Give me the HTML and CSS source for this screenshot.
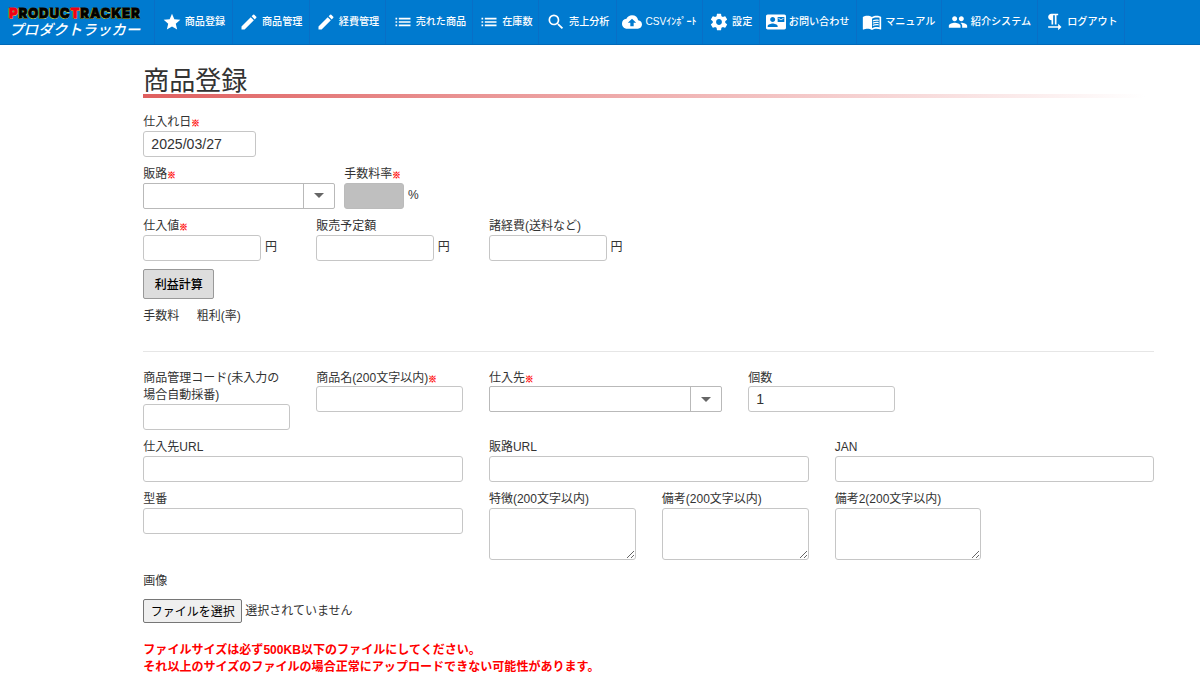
FILE: index.html
```html
<!DOCTYPE html>
<html lang="ja">
<head>
    <meta charset="utf-8">
    <title>商品登録</title>
    <link rel="stylesheet" href="styles.css">
</head>
<body>
    <header class="header">
        <a class="logo" href="#">
            <span class="logo-en"><span class="logo-red">P</span>RODUC<span class="logo-red">T</span>RACKER</span>
            <span class="logo-ja">プロダクトラッカー</span>
        </a>
        <nav class="menu">
            <a class="menu-item w78" href="#">
                <svg class="icon" viewBox="0 0 24 24"><path d="M12 17.27L18.18 21l-1.64-7.03L22 9.24l-7.19-.61L12 2 9.19 8.63 2 9.24l5.46 4.73L5.82 21z"/></svg>
                <span>商品登録</span>
            </a>
            <a class="menu-item w77" href="#">
                <svg class="icon" viewBox="0 0 24 24"><path d="M3 17.25V21h3.75L17.81 9.94l-3.75-3.75L3 17.25zM20.71 7.04a1 1 0 0 0 0-1.41l-2.34-2.34a1 1 0 0 0-1.41 0l-1.83 1.83 3.75 3.75 1.83-1.83z"/></svg>
                <span>商品管理</span>
            </a>
            <a class="menu-item w77" href="#">
                <svg class="icon" viewBox="0 0 24 24"><path d="M3 17.25V21h3.75L17.81 9.94l-3.75-3.75L3 17.25zM20.71 7.04a1 1 0 0 0 0-1.41l-2.34-2.34a1 1 0 0 0-1.41 0l-1.83 1.83 3.75 3.75 1.83-1.83z"/></svg>
                <span>経費管理</span>
            </a>
            <a class="menu-item w87" href="#">
                <svg class="icon" viewBox="0 0 24 24"><path d="M3 13h2v-2H3v2zm0 4h2v-2H3v2zm0-8h2V7H3v2zm4 4h14v-2H7v2zm0 4h14v-2H7v2zM7 7v2h14V7H7z"/></svg>
                <span>売れた商品</span>
            </a>
            <a class="menu-item w66" href="#">
                <svg class="icon" viewBox="0 0 24 24"><path d="M3 13h2v-2H3v2zm0 4h2v-2H3v2zm0-8h2V7H3v2zm4 4h14v-2H7v2zm0 4h14v-2H7v2zM7 7v2h14V7H7z"/></svg>
                <span>在庫数</span>
            </a>
            <a class="menu-item w78" href="#">
                <svg class="icon" viewBox="0 0 24 24"><path d="M15.5 14h-.79l-.28-.27A6.471 6.471 0 0 0 16 9.5 6.5 6.5 0 1 0 9.5 16c1.61 0 3.09-.59 4.23-1.57l.27.28v.79l5 4.99L20.49 19l-4.99-5zm-6 0C7.01 14 5 11.99 5 9.5S7.01 5 9.5 5 14 7.01 14 9.5 11.99 14 9.5 14z"/></svg>
                <span>売上分析</span>
            </a>
            <a class="menu-item w86" href="#">
                <svg class="icon" viewBox="0 0 24 24"><path d="M19.35 10.04A7.49 7.49 0 0 0 12 4C9.11 4 6.6 5.64 5.35 8.04A5.994 5.994 0 0 0 0 14c0 3.31 2.69 6 6 6h13c2.76 0 5-2.24 5-5 0-2.64-2.05-4.78-4.65-4.96zM14 13v4h-4v-4H7l5-5 5 5h-3z"/></svg>
                <span>CSVｲﾝﾎﾟｰﾄ</span>
            </a>
            <a class="menu-item w57" href="#">
                <svg class="icon" viewBox="0 0 24 24"><path d="M19.43 12.98c.04-.32.07-.64.07-.98s-.03-.66-.07-.98l2.11-1.65c.19-.15.24-.42.12-.64l-2-3.46c-.12-.22-.39-.3-.61-.22l-2.49 1c-.52-.4-1.08-.73-1.69-.98l-.38-2.65A.488.488 0 0 0 14 2h-4c-.25 0-.46.18-.49.42l-.38 2.65c-.61.25-1.17.59-1.69.98l-2.49-1c-.23-.09-.49 0-.61.22l-2 3.46c-.13.22-.07.49.12.64l2.11 1.65c-.04.32-.07.65-.07.98s.03.66.07.98l-2.11 1.65c-.19.15-.24.42-.12.64l2 3.46c.12.22.39.3.61.22l2.49-1c.52.4 1.08.73 1.69.98l.38 2.65c.03.24.24.42.49.42h4c.25 0 .46-.18.49-.42l.38-2.65c.61-.25 1.17-.59 1.69-.98l2.49 1c.23.09.49 0 .61-.22l2-3.46c.12-.22.07-.49-.12-.64l-2.11-1.65zM12 15.5c-1.93 0-3.5-1.57-3.5-3.5s1.57-3.5 3.5-3.5 3.5 1.57 3.5 3.5-1.57 3.5-3.5 3.5z"/></svg>
                <span>設定</span>
            </a>
            <a class="menu-item w97" href="#">
                <svg class="icon" viewBox="0 0 24 24"><path d="M21 8V7l-3 2-3-2v1l3 2 3-2zm1-5H2C.9 3 0 3.9 0 5v14c0 1.1.9 2 2 2h20c1.1 0 1.99-.9 1.99-2L24 5c0-1.1-.9-2-2-2zM8 6c1.66 0 3 1.34 3 3s-1.34 3-3 3-3-1.34-3-3 1.34-3 3-3zm6 12H2v-1c0-2 4-3.1 6-3.1s6 1.1 6 3.1v1zm8-6h-8V6h8v6z"/></svg>
                <span>お問い合わせ</span>
            </a>
            <a class="menu-item w85" href="#">
                <svg class="icon" viewBox="0 0 24 24"><path d="M21 5c-1.11-.35-2.33-.5-3.5-.5-1.95 0-4.05.4-5.5 1.5-1.45-1.1-3.55-1.5-5.5-1.5S2.45 4.9 1 6v14.65c0 .25.25.5.5.5.1 0 .15-.05.25-.05C3.1 20.45 5.05 20 6.5 20c1.95 0 4.05.4 5.5 1.5 1.35-.85 3.8-1.5 5.5-1.5 1.65 0 3.35.3 4.75 1.05.1.05.15.05.25.05.25 0 .5-.25.5-.5V6c-.6-.45-1.25-.75-2-1zm0 13.5c-1.1-.35-2.3-.5-3.5-.5-1.7 0-4.15.65-5.5 1.5V8c1.35-.85 3.8-1.5 5.5-1.5 1.2 0 2.4.15 3.5.5v11.5z"/><path d="M17.5 10.5c.88 0 1.73.09 2.5.26V9.24c-.79-.15-1.64-.24-2.5-.24-1.7 0-3.24.29-4.5.83v1.66c1.13-.64 2.7-.99 4.5-.99zM13 12.49v1.66c1.13-.64 2.7-.99 4.5-.99.88 0 1.73.09 2.5.26V11.9c-.79-.15-1.64-.24-2.5-.24-1.7 0-3.24.3-4.5.83zM17.5 14.33c-1.7 0-3.24.29-4.5.83v1.66c1.13-.64 2.7-.99 4.5-.99.88 0 1.73.09 2.5.26v-1.52c-.79-.16-1.64-.24-2.5-.24z"/></svg>
                <span>マニュアル</span>
            </a>
            <a class="menu-item w96" href="#">
                <svg class="icon" viewBox="0 0 24 24"><path d="M16 11c1.66 0 2.99-1.34 2.99-3S17.66 5 16 5s-3 1.34-3 3 1.34 3 3 3zm-8 0c1.66 0 2.99-1.34 2.99-3S9.66 5 8 5 5 6.34 5 8s1.34 3 3 3zm0 2c-2.33 0-7 1.17-7 3.5V19h14v-2.5c0-2.33-4.67-3.5-7-3.5zm8 0c-.29 0-.62.02-.97.05 1.16.84 1.97 1.97 1.97 3.45V19h6v-2.5c0-2.33-4.67-3.5-7-3.5z"/></svg>
                <span>紹介システム</span>
            </a>
            <a class="menu-item w87" href="#">
                <svg class="icon" viewBox="0 0 24 24"><path d="M9 10v5h2V4h2v11h2V4h2V2H9C6.79 2 5 3.79 5 6s1.79 4 4 4zm12 8l-4-4v3H5v2h12v3l4-4z"/></svg>
                <span>ログアウト</span>
            </a>
        </nav>
    </header>
    <main class="main">
        <h1 class="title">商品登録</h1>
        <form class="form">
            <div class="field date">
                <label>仕入れ日<b class="req">※</b></label>
                <input type="text" value="2025/03/27">
            </div>
            <div class="row">
                <div class="field route">
                    <label>販路<b class="req">※</b></label>
                    <div class="combo"><input type="text"><span class="arrow"></span></div>
                </div>
                <div class="field">
                    <label>手数料率<b class="req">※</b></label>
                    <div class="unit rate"><input type="text" disabled><span>%</span></div>
                </div>
            </div>
            <div class="grid">
                <div class="field">
                    <label>仕入値<b class="req">※</b></label>
                    <div class="unit"><input type="text"><span>円</span></div>
                </div>
                <div class="field">
                    <label>販売予定額</label>
                    <div class="unit"><input type="text"><span>円</span></div>
                </div>
                <div class="field">
                    <label>諸経費(送料など)</label>
                    <div class="unit"><input type="text"><span>円</span></div>
                </div>
            </div>
            <button class="calc" type="button">利益計算</button>
            <div class="result"><span>手数料</span><span>粗利(率)</span></div>
            <hr class="line">
            <div class="grid">
                <div class="field">
                    <label>商品管理コード(未入力の場合自動採番)</label>
                    <input type="text">
                </div>
                <div class="field">
                    <label>商品名(200文字以内)<b class="req">※</b></label>
                    <input type="text">
                </div>
                <div class="field span3">
                    <label>仕入先<b class="req">※</b></label>
                    <div class="combo"><input type="text"><span class="arrow"></span></div>
                </div>
                <div class="field">
                    <label>個数</label>
                    <input type="text" value="1">
                </div>
            </div>
            <div class="grid">
                <div class="field span4">
                    <label>仕入先URL</label>
                    <input type="text">
                </div>
                <div class="field span4">
                    <label>販路URL</label>
                    <input type="text">
                </div>
                <div class="field span4">
                    <label>JAN</label>
                    <input type="text">
                </div>
            </div>
            <div class="grid">
                <div class="field span4">
                    <label>型番</label>
                    <input type="text">
                </div>
                <div class="field">
                    <label>特徴(200文字以内)</label>
                    <textarea></textarea>
                </div>
                <div class="field">
                    <label>備考(200文字以内)</label>
                    <textarea></textarea>
                </div>
                <div class="field">
                    <label>備考2(200文字以内)</label>
                    <textarea></textarea>
                </div>
            </div>
            <div class="picture">
                <label>画像</label>
                <div class="file"><button type="button">ファイルを選択</button><span>選択されていません</span></div>
            </div>
            <p class="note">ファイルサイズは必ず500KB以下のファイルにしてください。<br>それ以上のサイズのファイルの場合正常にアップロードできない可能性があります。</p>
        </form>
    </main>
</body>
</html>
```
FILE: styles.css
```css
* {
    box-sizing: border-box;
}

html, body {
    margin: 0;
    padding: 0;
    overflow: hidden;
}

body, input, button, textarea {
    font-family: "Liberation Sans", "Noto Sans CJK JP", sans-serif;
    font-size: 12px;
    color: #333;
}

body {
    background-color: #fff;
    line-height: 17.4px;
}

.header {
    display: flex;
    height: 45px;
    background-color: #007acf;
    border-bottom: 1px solid #0069b8;
}

.logo {
    display: flex;
    flex-direction: column;
    gap: 2px;
    width: 155px;
    padding: 6px 0 0 9px;
    border-right: 1px solid #096fc6;
    text-decoration: none;
    white-space: nowrap;
}

.logo-en {
    color: #000;
    font-family: Inter, sans-serif;
    font-size: 13.2px;
    font-weight: 900;
    letter-spacing: 0.8px;
    line-height: 14px;
    -webkit-text-stroke: 0.8px;
    text-shadow: 0 0 1px #e8e84a, -1px 0 0 #c9d94f, 0 1px 0 #c9d94f;
}

.logo-red {
    color: #f00014;
}

.logo-ja {
    color: #fff;
    font-family: "Noto Sans CJK JP", sans-serif;
    font-size: 14.6px;
    font-weight: 500;
    font-style: italic;
    line-height: 13px;
}

.menu {
    display: flex;
}

.menu-item {
    display: flex;
    align-items: center;
    justify-content: center;
    gap: 3px;
    border-right: 1px solid #096fc6;
    color: #fff;
    font-size: 10.1px;
    font-weight: 500;
    text-decoration: none;
    white-space: nowrap;
}

.menu-item span {
    padding-bottom: 1px;
}

.icon {
    flex: none;
    width: 20px;
    height: 20px;
    fill: #fff;
}

.w57 { width: 56.8px; }
.w66 { width: 66px; }
.w77 { width: 76.8px; }
.w78 { width: 77.8px; }
.w85 { width: 85.4px; }
.w86 { width: 85.6px; }
.w87 { width: 87px; }
.w96 { width: 96px; }
.w97 { width: 97px; }

.main {
    width: 1011px;
    margin-left: 143.3px;
    padding-top: 18px;
}

.title {
    margin: 0;
    height: 35px;
    border-bottom: 4px solid;
    border-image: linear-gradient(to right, #df5f5f, #fff 99%) 1;
    font-size: 26px;
    font-weight: 400;
    line-height: 36px;
}

.form {
    display: flex;
    flex-direction: column;
    align-items: flex-start;
    gap: 8.7px;
    padding-top: 15.1px;
}

.field {
    display: flex;
    flex-direction: column;
    grid-column: span 2;
}

.span3 {
    grid-column: span 3;
}

.span4 {
    grid-column: span 4;
}

.req {
    color: #f00;
    font-size: 8.5px;
    line-height: 0;
    -webkit-text-stroke: 0.3px;
}

label {
    display: block;
    margin-bottom: -0.6px;
    padding-top: 0.6px;
}

input, textarea {
    width: 100%;
    min-width: 0;
    margin: 0;
    border: 1px solid #c6c6c6;
    border-radius: 3px;
    background-color: #fff;
}

input {
    height: 26px;
    padding: 0 7px;
    font-size: 14.1px;
}

textarea {
    display: block;
    height: 52px;
}

.date {
    width: 113px;
}

.row {
    display: flex;
    gap: 9px;
}

.route {
    width: 192px;
}

.grid {
    display: grid;
    grid-template-columns: repeat(12, 1fr);
    column-gap: 26px;
    width: 100%;
}

.combo {
    display: flex;
    height: 26px;
    border: 1px solid #b9b9b9;
    border-radius: 2px;
}

.combo input {
    height: 24px;
    border: 0;
}

.span3 .combo {
    width: 233px;
}

.arrow {
    display: flex;
    flex: none;
    align-items: center;
    justify-content: center;
    width: 31px;
    border-left: 1px solid #b9b9b9;
}

.arrow::before {
    content: "";
    border: 5px solid transparent;
    border-top-color: #666;
    border-bottom: 0;
}

.unit {
    display: flex;
    align-items: center;
    gap: 3.6px;
}

.unit input {
    width: 118px;
}

.unit span {
    padding-top: 1px;
}

.rate input {
    width: 60px;
    border-color: #bbb;
    background-color: #bfbfbf;
}

.calc {
    width: 71px;
    height: 30px;
    padding: 0 0 1px;
    border: 1px solid #999;
    border-radius: 2px;
    background-color: #ddd;
    color: #000;
    font-weight: 500;
}

.result {
    display: flex;
    gap: 17.5px;
}

.line {
    width: 100%;
    margin: 16.6px 0 8.5px;
    border: 0;
    border-top: 1px solid #e6e6e6;
}

.picture {
    padding-top: 4px;
}

.file {
    display: flex;
    align-items: center;
    gap: 3px;
    padding-top: 9px;
}

.file button {
    width: 99px;
    height: 24px;
    padding: 0 0 2px;
    border: 1px solid #767676;
    border-radius: 2px;
    background-color: #efefef;
    color: #000;
}

.file span {
    padding-top: 1px;
}

.note {
    margin: 10px 0 0;
    color: #f00;
    font-size: 12.05px;
    font-weight: 700;
}
```
